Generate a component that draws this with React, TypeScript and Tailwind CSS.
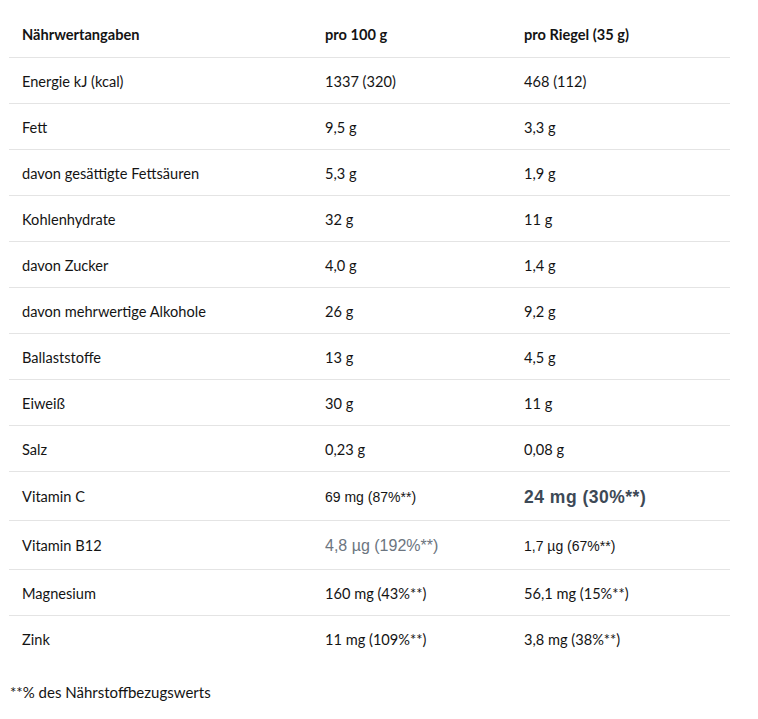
import React from "react";

type Row = { name: string; per100: React.ReactNode; perBar: React.ReactNode; tall?: boolean; last?: boolean };

const arial = "font-['Liberation_Sans',Arial,sans-serif]";

const rows: Row[] = [
  { name: "Energie kJ (kcal)", per100: "1337 (320)", perBar: "468 (112)" },
  { name: "Fett", per100: "9,5 g", perBar: "3,3 g" },
  { name: "davon gesättigte Fettsäuren", per100: "5,3 g", perBar: "1,9 g" },
  { name: "Kohlenhydrate", per100: "32 g", perBar: "11 g" },
  { name: "davon Zucker", per100: "4,0 g", perBar: "1,4 g" },
  { name: "davon mehrwertige Alkohole", per100: "26 g", perBar: "9,2 g" },
  { name: "Ballaststoffe", per100: "13 g", perBar: "4,5 g" },
  { name: "Eiweiß", per100: "30 g", perBar: "11 g" },
  { name: "Salz", per100: "0,23 g", perBar: "0,08 g" },
  {
    name: "Vitamin C",
    per100: <span className={`${arial} text-[14px]`}>69 mg (87%**)</span>,
    perBar: <span className={`${arial} text-[17.5px] font-bold tracking-[0.5px] text-[#3d4956]`}>24 mg (30%**)</span>,
    tall: true,
  },
  {
    name: "Vitamin B12",
    per100: <span className={`${arial} text-[16px] text-[#6c7580]`}>4,8 µg (192%**)</span>,
    perBar: <span className={`${arial} text-[14px]`}>1,7 µg (67%**)</span>,
    tall: true,
  },
  { name: "Magnesium", per100: "160 mg (43%**)", perBar: "56,1 mg (15%**)" },
  { name: "Zink", per100: "11 mg (109%**)", perBar: "3,8 mg (38%**)", last: true },
];

export default function App() {
  return (
    <div className="min-h-[719px] bg-white font-['Lato',sans-serif] text-[14.6px] text-[#141414]">
      <div className="pl-[9px] pt-[13px] w-[730px]">
        <table className="w-full border-collapse">
          <thead>
            <tr className="h-[44px] border-b border-[#e4e4e4]">
              <th className="w-[304px] pl-[13px] text-left font-bold">Nährwertangaben</th>
              <th className="w-[199px] pl-[12px] text-left font-bold">pro 100 g</th>
              <th className="pl-[12px] text-left font-bold">pro Riegel (35 g)</th>
            </tr>
          </thead>
          <tbody>
            {rows.map((r) => (
              <tr
                key={r.name}
                className={`${r.tall ? "h-[49px]" : "h-[46px]"} ${r.last ? "" : "border-b border-[#e4e4e4]"}`}
              >
                <td className="pl-[13px] pt-[3px]">{r.name}</td>
                <td className="pl-[12px] pt-[3px]">{r.per100}</td>
                <td className="pl-[12px] pt-[3px]">{r.perBar}</td>
              </tr>
            ))}
          </tbody>
        </table>
      </div>
      <p className="pl-[10px] mt-[20px] text-[15px]">**% des Nährstoffbezugswerts</p>
    </div>
  );
}
